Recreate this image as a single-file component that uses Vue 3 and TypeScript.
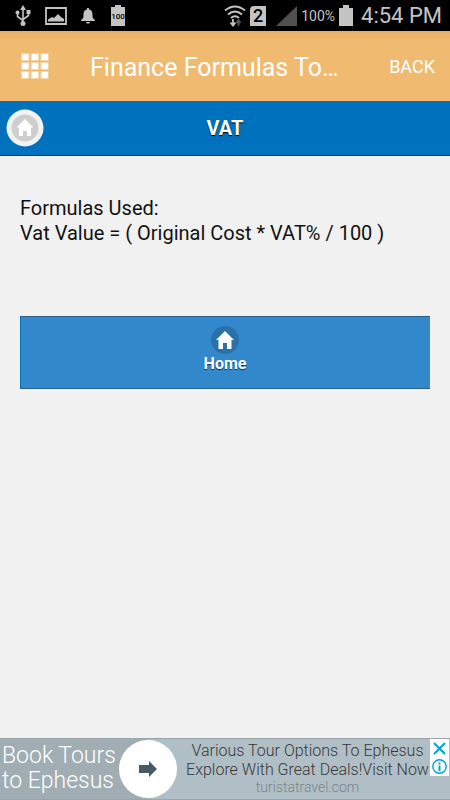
<script setup lang="ts">
import { ref } from 'vue'

const appTitle = 'Finance Formulas To…'
const pageTitle = 'VAT'
const formulas: string[] = ['Vat Value = ( Original Cost * VAT% / 100 )']
const tiles: { x: number; y: number }[] = [0, 1, 2].flatMap((row) =>
  [0, 1, 2].map((col) => ({ x: 1 + col * 9.7, y: 1 + row * 9 })),
)
const adVisible = ref(true)
</script>

<template>
  <div class="screen">
    <div class="status">
      <div class="status-group left">
        <svg width="16" height="22" viewBox="0 0 16 22" fill="none" stroke="#c4c4c4" stroke-width="1.600">
          <path d="M8 3v15M2.500 8v3.500l5.500 4M13.500 7v3.500L8 14.500" />
          <path d="M8 0l3 5H5z" fill="#c4c4c4" stroke="none" />
          <circle cx="8" cy="18.500" r="2.500" fill="#c4c4c4" stroke="none" />
          <circle cx="2.500" cy="7.500" r="2" fill="#c4c4c4" stroke="none" />
          <path d="M11.500 5h4v4h-4z" fill="#c4c4c4" stroke="none" />
        </svg>
        <svg width="22" height="20" viewBox="0 0 22 20">
          <path d="M1 2h20v16H1z" fill="none" stroke="#c4c4c4" stroke-width="1.800" />
          <path d="M3 15.500v-2l4-2.500 2 1 4-4 3 3 3 2v2.500z" fill="#c4c4c4" />
        </svg>
        <svg width="14" height="18" viewBox="0 0 14 18" fill="#c4c4c4">
          <path d="M6 1h2v1.500c3 .6 3.500 3 3.500 5.500 0 3 .5 4 2.500 5v1H0v-1c2-1 2.500-2 2.500-5C2.500 5.500 3 3.100 6 2.500zM5 15h4c0 2-4 2-4 0z" />
        </svg>
        <svg class="mini-battery" width="14" height="21" viewBox="0 0 14 21">
          <path d="M4 0h6v2h4v19H0V2h4z" fill="#c4c4c4" />
          <text x="7" y="14" text-anchor="middle">100</text>
        </svg>
      </div>
      <div class="status-group right">
        <svg width="22" height="22" viewBox="0 0 22 22" fill="none" stroke="#c4c4c4" stroke-width="2">
          <path d="M1 5.500q10-8 20 0M4 9.500q7-6 14 0M7 13q4-3.500 8 0" />
          <path d="M9 14v5M6.500 17.500L9 20.500l2.500-3" stroke-width="1.800" />
          <path d="M14.500 21v-5M12.500 18l2-3 2 3" stroke="#555" stroke-width="1.800" />
        </svg>
        <span class="sim">2</span>
        <svg width="21" height="20" viewBox="0 0 21 20"><path d="M21 0v20H0z" fill="#505050" /></svg>
        <span class="percent">100%</span>
        <svg width="14" height="21" viewBox="0 0 14 21"><path d="M4 0h6v3h4v18H0V3h4z" fill="#c4c4c4" /></svg>
        <span class="clock">4:54 PM</span>
      </div>
    </div>

    <header class="appbar">
      <button class="menu" type="button" aria-label="Menu">
        <svg width="30" height="28" viewBox="0 0 30 28">
          <rect v-for="(t, i) in tiles" :key="i" :x="t.x" :y="t.y" width="8.500" height="8" rx="1" fill="#fff" fill-opacity=".4" />
          <rect v-for="(t, i) in tiles" :key="'c' + i" :x="t.x + 1" :y="t.y + 1" width="6.500" height="6" rx="1" fill="#fff" />
        </svg>
      </button>
      <span class="app-title">{{ appTitle }}</span>
      <button class="back" type="button">BACK</button>
    </header>

    <div class="titlebar">
      <a class="home-badge" href="#" aria-label="Home">
        <svg width="38" height="38" viewBox="0 0 38 38">
          <circle cx="19" cy="19" r="18.500" fill="#f2f2f2" />
          <circle cx="19" cy="19" r="13.500" fill="#cecece" />
          <path d="M19 10l8.500 8.500H25V27h-4v-5h-4v5h-4v-8.500h-2.500z" fill="#fff" />
        </svg>
      </a>
      <h1>{{ pageTitle }}</h1>
    </div>

    <main class="content">
      <section class="formula">
        <p>Formulas Used:</p>
        <p v-for="f in formulas" :key="f">{{ f }}</p>
      </section>
      <a class="home" href="#">
        <svg width="28" height="28" viewBox="0 0 28 28">
          <circle cx="14" cy="14" r="14" fill="#2a71a8" />
          <path d="M14 5l9 9h-2.500v9H16v-6h-4v6H7.500v-9H5z" fill="#fff" />
        </svg>
        <span>Home</span>
      </a>
    </main>

    <aside v-if="adVisible" class="ad">
      <a class="ad-title" href="#">Book Tours<br />to Ephesus</a>
      <a class="ad-go" href="#" aria-label="Open">
        <svg width="18" height="16" viewBox="0 0 18 16"><path d="M0 4h10V0l8 8-8 8v-4H0z" fill="#455a64" /></svg>
      </a>
      <div class="ad-copy">
        <p>Various Tour Options To Ephesus</p>
        <p>Explore With Great Deals!Visit Now</p>
        <p class="ad-url">turistatravel.com</p>
      </div>
      <div class="ad-controls">
        <button type="button" aria-label="Close" @click="adVisible = false">
          <svg width="19" height="18" viewBox="0 0 19 18"><path d="M4 4l11 11M15 4L4 15" stroke="#00a5cf" stroke-width="2" fill="none" /></svg>
        </button>
        <button type="button" aria-label="About this ad">
          <svg width="19" height="19" viewBox="0 0 19 19">
            <circle cx="9.500" cy="9.500" r="6.700" stroke="#00a5cf" stroke-width="1.400" fill="none" />
            <path d="M8.500 5.500h2v2h-2zM8.500 8.500h2V14h-2z" fill="#00a5cf" />
          </svg>
        </button>
      </div>
    </aside>
  </div>
</template>

<style>
body {
  margin: 0;
  background: #f1f1f1;
}
</style>

<style scoped>
.screen {
  display: flex;
  flex-direction: column;
  min-height: 100vh;
  font-family: Roboto, "Liberation Sans", sans-serif;
  color: #111;
}
.screen * {
  box-sizing: border-box;
}
svg {
  display: block;
  flex: none;
}
p,
h1 {
  margin: 0;
}
button {
  border: 0;
  padding: 0;
  background: none;
  font: inherit;
  color: inherit;
}
a {
  color: inherit;
  text-decoration: none;
}
.status {
  display: flex;
  justify-content: space-between;
  height: 31px;
  padding: 0 8px 0 15px;
  background: #000;
  color: #c4c4c4;
}
.status-group {
  display: flex;
  align-items: center;
}
.left {
  gap: 14px;
}
.left .mini-battery {
  margin-left: 2px;
}
.mini-battery text {
  fill: #000;
  font-size: 8px;
  font-weight: 500;
}
.sim {
  width: 16px;
  height: 20px;
  margin: 0 10px 0 4px;
  border-radius: 4px 0 0 0;
  background: #c4c4c4;
  color: #000;
  font-size: 18px;
  font-weight: 500;
  line-height: 20px;
  text-align: center;
}
.percent {
  margin: 0 4px;
  font-size: 14px;
}
.clock {
  margin-left: 8px;
  font-size: 22px;
}
.appbar {
  display: flex;
  align-items: center;
  height: 70px;
  padding: 0 15px 0 20px;
  background: linear-gradient(#e9af68, #f0bb70 12px);
  color: #fff;
}
.menu {
  width: 30px;
}
.app-title {
  flex: 1;
  margin: 2px 0 0 40px;
  font-size: 25px;
  white-space: nowrap;
}
.back {
  font-size: 18px;
}
.titlebar {
  display: grid;
  grid-template-columns: 38px 1fr 38px;
  align-items: center;
  height: 55px;
  padding: 0 6px 2px;
  border-top: 1px solid #35617d;
  border-bottom: 1px solid #003371;
  background: #0071bd;
}
h1 {
  color: #fff;
  font-size: 20px;
  font-weight: 700;
  text-align: center;
  text-shadow: 0 1px 1px #000;
}
.content {
  flex: 1;
  padding: 40px 20px;
}
.formula {
  padding-bottom: 70px;
  font-size: 20px;
  line-height: 25px;
}
.home {
  display: flex;
  flex-direction: column;
  align-items: center;
  height: 73px;
  padding-top: 9px;
  border: solid #2c5f87;
  border-width: 1px 0;
  background: #3388cc;
  box-shadow: inset 1px 0 #0071bd;
  color: #fff;
  font-size: 16px;
  font-weight: 700;
  line-height: 20px;
  text-shadow: 0 1px 1px #002f66;
}
.ad {
  display: flex;
  align-items: center;
  height: 62px;
  border: solid #98a5ab;
  border-width: 1px 0;
  background: #b0bec5;
  position: relative;
}
.ad-title {
  display: flex;
  flex: none;
  align-items: center;
  width: 148px;
  height: 60px;
  padding: 0 0 3px 2px;
  background: #a0adb3;
  color: #fff;
  font-size: 23px;
  font-weight: 300;
  line-height: 25px;
}
.ad-go {
  display: flex;
  flex: none;
  align-items: center;
  justify-content: center;
  width: 58px;
  height: 58px;
  margin-left: -29px;
  border-radius: 50%;
  background: #fff;
}
.ad-copy {
  display: flex;
  flex: 1;
  flex-direction: column;
  align-items: center;
  padding: 0 15px 2px 3px;
  color: #37393b;
  font-size: 16px;
  font-weight: 300;
  line-height: 19px;
  white-space: nowrap;
}
.ad-copy .ad-url {
  color: #7b858a;
  font-size: 14px;
  line-height: 16px;
}
.ad-controls {
  position: absolute;
  top: 0;
  right: 1px;
  display: flex;
  flex-direction: column;
  background: #fff;
}
</style>
